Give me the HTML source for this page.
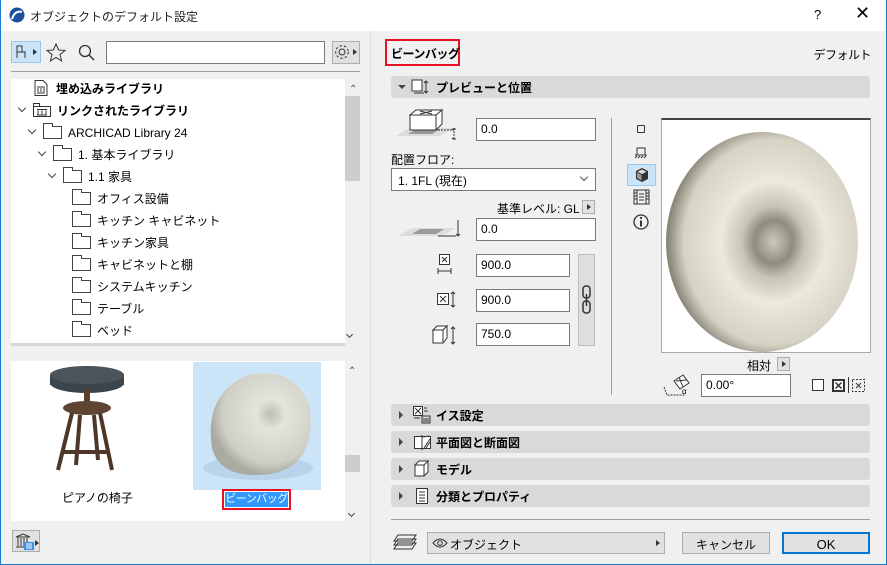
<!DOCTYPE html>
<html><head><meta charset="utf-8"><style>
*{box-sizing:border-box;margin:0;padding:0}
body{width:887px;height:565px;overflow:hidden;background:#f0f0f0;font-family:"Liberation Sans","Noto Sans CJK JP",sans-serif;font-size:12px;color:#000;position:relative}
.a{position:absolute;white-space:nowrap}
.inp{position:absolute;background:#fff;border:1px solid #7a7a7a;padding:3px 0 0 4px;font-size:12px;white-space:nowrap}
.sec{position:absolute;left:391px;width:479px;height:22px;background:#d9d9d9;border-radius:3px;font-weight:bold;font-size:12px}
.sec .t{position:absolute;left:45px;top:3px}
.sec .tri{position:absolute;left:8px;top:7px;width:0;height:0;border-left:4px solid #444;border-top:4px solid transparent;border-bottom:4px solid transparent}
.row{position:absolute;height:22px;line-height:22px;font-size:12px;white-space:nowrap}
.fold{display:inline-block;width:19px;height:13px;border:1px solid #444;vertical-align:-2px;margin-right:6px;position:relative;background:#fff}
.fold:before{content:"";position:absolute;left:-1px;top:-4px;width:8px;height:3px;border:1px solid #444;border-bottom:none;background:#fff}
.chev{display:inline-block;width:6px;height:6px;border-right:1.5px solid #444;border-bottom:1.5px solid #444;transform:rotate(45deg);margin-right:8px;vertical-align:4px}
.btn{position:absolute;background:#e1e1e1;border:1px solid #adadad;text-align:center;font-size:12px;white-space:nowrap}
</style></head><body>
<div class="a" style="left:0;top:0;width:887px;height:565px;border:1px solid #1979ca;border-top:none"></div>
<div class="a" style="left:1px;top:0;width:885px;height:31px;background:#fff"></div>
<svg class="a" style="left:9px;top:7px" width="16" height="16"><circle cx="8" cy="8" r="7.5" fill="#1f4e9c"/><path d="M3 12 Q6 3 13 5" stroke="#fff" stroke-width="2" fill="none"/></svg>
<div class="a" style="left:30px;top:8px;font-size:12px;color:#222">オブジェクトのデフォルト設定</div>
<div class="a" style="left:814px;top:7px;font-size:13px">?</div>
<div class="a" style="left:855px;top:3px;font-size:18px;font-weight:300">✕</div>

<div class="a" style="left:11px;top:41px;width:30px;height:22px;background:#cce4f7;border:1px solid #99c9ef"></div>
<svg class="a" style="left:14px;top:44px" width="26" height="16"><path d="M3 2h5v6H3zM3 8h8v6M3 8v6M11 8v6" stroke="#333" fill="none"/><path d="M19 5l4 3-4 3z" fill="#333"/></svg>
<svg class="a" style="left:46px;top:43px" width="20" height="19"><path d="M10 1l2.6 6 6.4.4-5 4.2 1.6 6.3L10 14.5 4.4 18 6 11.6 1 7.4 7.4 7z" stroke="#333" fill="none"/></svg>
<svg class="a" style="left:78px;top:44px" width="18" height="18"><circle cx="7" cy="7" r="5.5" stroke="#333" fill="none" stroke-width="1.3"/><path d="M11 11l5 5" stroke="#333" stroke-width="1.5"/></svg>
<div class="inp" style="left:106px;top:41px;width:219px;height:23px"></div>
<div class="btn" style="left:332px;top:41px;width:28px;height:23px"></div>
<svg class="a" style="left:334px;top:44px" width="26" height="18"><circle cx="8" cy="8" r="3" stroke="#333" fill="none"/><circle cx="8" cy="8" r="6.3" stroke="#333" fill="none" stroke-dasharray="2.5 2"/><path d="M19 5l4 3-4 3z" fill="#333"/></svg>
<div class="a" style="left:11px;top:71px;width:349px;height:1px;background:#a0a0a0"></div>

<div class="a" style="left:11px;top:79px;width:334px;height:266px;background:#fff"></div>
<div class="a" style="left:345px;top:79px;width:15px;height:266px;background:#f0f0f0"></div>
<div class="a" style="left:345px;top:96px;width:15px;height:85px;background:#cdcdcd"></div>
<div class="a" style="left:349px;top:84px;font-size:10px;color:#555">⌃</div>
<div class="a" style="left:347px;top:330px;width:9px;height:9px;"><div class="chev" style="width:5px;height:5px"></div></div>
<div class="row" style="left:34px;top:78px;font-weight:bold"><svg width="14" height="16" style="vertical-align:-3px;margin-right:8px"><path d="M1 .5h8l4 4v11H1z" stroke="#333" fill="#fff"/><path d="M3 7h8M4 8v4M7 8v4M10 8v4M3 13h8" stroke="#333"/></svg>埋め込みライブラリ</div>
<div class="row" style="left:19px;top:100px;font-weight:bold"><span class="chev"></span><svg width="18" height="14" style="vertical-align:-2px;margin-right:6px"><path d="M.5 3.5h17v10H.5zM.5 3.5V.5h6v3" stroke="#333" fill="#fff"/><path d="M4 6.5h10M5 7.5v4M9 7.5v4M13 7.5v4M4 12h10" stroke="#333"/></svg>リンクされたライブラリ</div>
<div class="row" style="left:29px;top:122px"><span class="chev"></span><span class="fold"></span>ARCHICAD Library 24</div>
<div class="row" style="left:39px;top:144px"><span class="chev"></span><span class="fold"></span>1. 基本ライブラリ</div>
<div class="row" style="left:49px;top:166px"><span class="chev"></span><span class="fold"></span>1.1 家具</div>
<div class="row" style="left:72px;top:188px"><span class="fold"></span>オフィス設備</div>
<div class="row" style="left:72px;top:210px"><span class="fold"></span>キッチン キャビネット</div>
<div class="row" style="left:72px;top:232px"><span class="fold"></span>キッチン家具</div>
<div class="row" style="left:72px;top:254px"><span class="fold"></span>キャビネットと棚</div>
<div class="row" style="left:72px;top:276px"><span class="fold"></span>システムキッチン</div>
<div class="row" style="left:72px;top:298px"><span class="fold"></span>テーブル</div>
<div class="row" style="left:72px;top:320px"><span class="fold"></span>ベッド</div>
<div class="a" style="left:11px;top:343px;width:334px;height:3px;background:#d6d6d6"></div>

<div class="a" style="left:11px;top:361px;width:334px;height:160px;background:#fff"></div>
<div class="a" style="left:345px;top:361px;width:15px;height:160px;background:#f0f0f0"></div>
<div class="a" style="left:345px;top:455px;width:15px;height:17px;background:#cdcdcd"></div>
<div class="a" style="left:348px;top:366px;font-size:10px;color:#555">⌃</div>
<div class="a" style="left:349px;top:509px"><div class="chev" style="width:5px;height:5px"></div></div>
<svg class="a" style="left:50px;top:365px" width="90" height="115"><ellipse cx="37" cy="18" rx="37" ry="10" fill="#3d454c"/><rect x="0" y="10" width="74" height="10" fill="#3d454c"/><ellipse cx="37" cy="10" rx="37" ry="9" fill="#4b545b"/><rect x="34" y="25" width="6" height="12" fill="#5b4030"/><ellipse cx="37" cy="43" rx="24" ry="7" fill="#5f4434"/><path d="M22 48L8 105M50 48l12 57M30 50l-4 50M44 50l4 45M12 87h46" stroke="#4e3628" stroke-width="4"/></svg>
<div class="a" style="left:62px;top:489px">ピアノの椅子</div>
<div class="a" style="left:193px;top:362px;width:128px;height:128px;background:#cce4f7"></div>
<svg class="a" style="left:200px;top:368px" width="115" height="118"><defs><radialGradient id="g" cx="0.6" cy="0.4" r="0.6"><stop offset="0" stop-color="#bdbdb4"/><stop offset="0.25" stop-color="#e4e4dc"/><stop offset="0.8" stop-color="#cfcfc6"/><stop offset="1" stop-color="#a9aaa1"/></radialGradient></defs><ellipse cx="58" cy="100" rx="55" ry="12" fill="#b8d3ea"/><path d="M45 8 Q95 -4 110 40 Q116 98 70 106 Q20 112 12 80 Q4 28 45 8z" fill="url(#g)"/></svg>
<div class="a" style="left:222px;top:489px;width:69px;height:21px;border:2px solid #e81123"></div>
<div class="a" style="left:225px;top:492px;width:63px;height:15px;background:#3399ff;color:#fff;font-size:11px;line-height:15px;text-align:center;letter-spacing:-0.5px;overflow:hidden">ビーンバッグ</div>
<div class="btn" style="left:12px;top:530px;width:28px;height:22px;background:#e1e1e1"></div>
<svg class="a" style="left:14px;top:532px" width="26" height="20"><path d="M2 5l7-3 7 3zM2 5h14M4 6v8M7 6v8M10 6v8M13 6v8M2 15h14" stroke="#333" fill="none"/><rect x="10" y="10" width="10" height="8" fill="#3c8ee6"/><path d="M12 12h6M12 14h6M12 16h6" stroke="#fff"/><path d="M21 8l4 3-4 3z" fill="#333"/></svg>

<div class="a" style="left:370px;top:31px;width:1px;height:533px;background:#dcdcdc"></div>

<div class="a" style="left:385px;top:39px;width:75px;height:27px;border:2px solid #e81123"></div>
<div class="a" style="left:391px;top:45px;font-weight:bold;font-size:12px;letter-spacing:-0.5px">ビーンバッグ</div>
<div class="a" style="right:16px;top:46px;font-size:12px;letter-spacing:-0.5px">デフォルト</div>

<div class="sec" style="top:76px"><span class="a" style="left:7px;top:9px;border-top:4px solid #444;border-left:4px solid transparent;border-right:4px solid transparent"></span>
<svg class="a" style="left:20px;top:3px" width="20" height="16"><path d="M1 1h10v11H1z" stroke="#333" fill="#fff"/><path d="M3 14h10M15 2v12M13 4l2-2 2 2M13 12l2 2 2-2" stroke="#333" fill="none"/></svg><span class="t">プレビューと位置</span></div>

<svg class="a" style="left:396px;top:108px" width="66" height="40"><path d="M0 28l14-8h44l-14 8z" fill="#dcdcdc"/><path d="M12 26l8-5h24l-8 5z" fill="#9a9a9a"/><path d="M14 7l6-5h26l-6 5zM14 7h26v15H14zM40 7l6-5v14l-6 6" stroke="#333" fill="#fff"/><path d="M24 3l12 3M36 3l-12 3" stroke="#333"/><path d="M42 22h16M58 20v12M56 22l2-2 2 2M56 30l2 2 2-2" stroke="#333" fill="none" stroke-dasharray="2 1"/></svg>
<div class="inp" style="left:476px;top:118px;width:120px;height:23px">0.0</div>
<div class="a" style="left:391px;top:151px">配置フロア:</div>
<div class="inp" style="left:391px;top:168px;width:205px;height:23px;padding-left:6px">1. 1FL (現在)<span class="a" style="right:8px;top:5px;width:6px;height:6px;border-right:1px solid #555;border-bottom:1px solid #555;transform:rotate(45deg)"></span></div>
<div class="a" style="left:497px;top:200px">基準レベル: GL</div>
<div class="btn" style="left:582px;top:200px;width:13px;height:14px"><span class="a" style="left:4px;top:3px;border-left:4px solid #333;border-top:3.5px solid transparent;border-bottom:3.5px solid transparent"></span></div>
<svg class="a" style="left:398px;top:218px" width="64" height="22"><path d="M0 18l14-8h44l-14 8z" fill="#dcdcdc"/><path d="M14 16l8-5h24l-8 5z" fill="#9a9a9a"/><path d="M40 18h18M60 2v16M58 16l2 2 2-2" stroke="#333" fill="none"/></svg>
<div class="inp" style="left:476px;top:218px;width:120px;height:23px">0.0</div>
<svg class="a" style="left:436px;top:254px" width="22" height="22"><rect x="3.5" y=".5" width="10" height="10" stroke="#333" fill="#fff"/><path d="M6 3l5 5M11 3l-5 5M2 14v6M15 14v6M2 17h13" stroke="#333"/></svg>
<div class="inp" style="left:476px;top:254px;width:94px;height:23px">900.0</div>
<svg class="a" style="left:437px;top:290px" width="24" height="20"><rect x=".5" y="3.5" width="11" height="11" stroke="#333" fill="#fff"/><path d="M3 6l6 6M9 6l-6 6M16 2v15M14 4l2-2 2 2M14 15l2 2 2-2" stroke="#333" fill="none"/></svg>
<div class="inp" style="left:476px;top:289px;width:94px;height:23px">900.0</div>
<svg class="a" style="left:432px;top:323px" width="28" height="24"><path d="M1 7l4-4h10l-4 4zM1 7h10v13H1zM11 7l4-4v12l-4 5" stroke="#333" fill="#fff"/><path d="M21 4v17M19 6l2-2 2 2M19 19l2 2 2-2" stroke="#333" fill="none"/></svg>
<div class="inp" style="left:476px;top:323px;width:94px;height:23px">750.0</div>
<div class="a" style="left:578px;top:254px;width:17px;height:92px;background:#dedede;border:1px solid #bdbdbd"></div>
<svg class="a" style="left:581px;top:285px" width="12" height="30"><rect x="2" y="1" width="7" height="12" rx="3" stroke="#333" fill="none" stroke-width="1.5"/><rect x="2" y="16" width="7" height="12" rx="3" stroke="#333" fill="none" stroke-width="1.5"/><path d="M5.5 9v12" stroke="#333" stroke-width="1.5"/></svg>
<div class="a" style="left:611px;top:118px;width:1px;height:277px;background:#a0a0a0"></div>

<div class="a" style="left:637px;top:125px;width:8px;height:8px;border:1.3px solid #333;border-radius:1px"></div>
<svg class="a" style="left:634px;top:146px" width="16" height="14"><path d="M3 9V2h8v7M1 9h12" stroke="#333" fill="none"/><path d="M1 12l2-2M4 12l2-2M7 12l2-2M10 12l2-2" stroke="#333"/></svg>
<div class="a" style="left:627px;top:164px;width:29px;height:22px;background:#cce4f7;border:1px solid #99c9ef"></div>
<svg class="a" style="left:634px;top:167px" width="16" height="16"><path d="M8 1l6 3v8l-6 3-6-3V4z" fill="#333"/><path d="M8 2.5l4.5 2.2L8 7 3.5 4.7z" fill="#ddd"/><path d="M3 5.5L7.5 8v5.5L3 11z" fill="#999"/></svg>
<svg class="a" style="left:633px;top:189px" width="17" height="16"><path d="M1 1h15v14H1zM4 1v14M13 1v14M6 5h5M6 8h5M6 11h5" stroke="#333" fill="none"/><path d="M1 4h3M1 7h3M1 10h3M13 4h3M13 7h3M13 10h3" stroke="#333"/></svg>
<svg class="a" style="left:633px;top:214px" width="16" height="16"><circle cx="8" cy="8" r="7" stroke="#333" fill="none" stroke-width="1.3"/><path d="M8 6.5v6" stroke="#333" stroke-width="2"/><circle cx="8" cy="4" r="1.1" fill="#333"/></svg>

<div class="a" style="left:661px;top:118px;width:210px;height:235px;background:#fff;border:1px solid #aaa;border-top:2px solid #444"></div>
<svg class="a" style="left:662px;top:120px" width="208" height="232"><defs><radialGradient id="d" cx="0.56" cy="0.5" r="0.55"><stop offset="0" stop-color="#cfcabb"/><stop offset="0.18" stop-color="#8f8b7e"/><stop offset="0.3" stop-color="#c8c4b6"/><stop offset="0.5" stop-color="#ece9dd"/><stop offset="0.85" stop-color="#d6d2c4"/><stop offset="1" stop-color="#8a8678"/></radialGradient></defs><ellipse cx="100" cy="122" rx="96" ry="110" fill="url(#d)"/></svg>
<div class="a" style="left:747px;top:357px">相対</div>
<div class="btn" style="left:777px;top:357px;width:13px;height:14px"><span class="a" style="left:4px;top:3px;border-left:4px solid #333;border-top:3.5px solid transparent;border-bottom:3.5px solid transparent"></span></div>
<svg class="a" style="left:662px;top:372px" width="30" height="26"><path d="M12 9l9-6 6 8-9 6z" stroke="#333" fill="#fff"/><path d="M14 9l11-1M17 5l4 10" stroke="#333"/><path d="M2 15l3 8h18" stroke="#333" fill="none" stroke-dasharray="2 1"/><text x="20" y="22" font-size="8" font-family="Liberation Sans">α</text></svg>
<div class="inp" style="left:701px;top:374px;width:90px;height:23px">0.00°</div>
<div class="a" style="left:812px;top:379px;width:12px;height:12px;border:1px solid #333;background:#fff"></div>
<svg class="a" style="left:832px;top:379px" width="13" height="13"><rect x="0" y="0" width="13" height="13" fill="#333"/><rect x="2" y="2" width="9" height="9" fill="#fff"/><path d="M3.5 3.5l6 6M9.5 3.5l-6 6" stroke="#333" stroke-width="1.5"/></svg>
<div class="a" style="left:848px;top:377px;width:1px;height:16px;background:#333"></div>
<svg class="a" style="left:852px;top:379px" width="13" height="13"><rect x=".5" y=".5" width="12" height="12" stroke="#333" fill="none" stroke-dasharray="2 1.5"/><path d="M4 4l5 5M9 4l-5 5" stroke="#333"/></svg>

<div class="sec" style="top:404px"><span class="tri"></span><svg class="a" style="left:22px;top:2px" width="18" height="18"><rect x=".5" y=".5" width="9" height="9" stroke="#333" fill="#fff"/><path d="M2 2l6 6M8 2l-6 6M11 2h3M11 5h4M9 10h8v7H9zM10 13h6M10 15h6M1 12h6" stroke="#333" fill="none"/></svg><span class="t">イス設定</span></div>
<div class="sec" style="top:431px"><span class="tri"></span><svg class="a" style="left:23px;top:3px" width="18" height="16"><path d="M.5 2.5h16v12H.5z" stroke="#333" fill="#fff"/><path d="M9 3l6-1M10 14l6-9M12 14l4-6M8 1v15" stroke="#333"/></svg><span class="t">平面図と断面図</span></div>
<div class="sec" style="top:458px"><span class="tri"></span><svg class="a" style="left:23px;top:2px" width="16" height="17"><path d="M1 5l4-4h9l-4 4zM1 5h9v11H1zM10 5l4-4v11l-4 4" stroke="#333" fill="#fff"/></svg><span class="t">モデル</span></div>
<div class="sec" style="top:485px"><span class="tri"></span><svg class="a" style="left:25px;top:3px" width="12" height="16"><path d="M.5 .5h11v15H.5zM3 4h6M3 7h6M3 10h6M3 13h6" stroke="#333" fill="#fff"/></svg><span class="t">分類とプロパティ</span></div>

<div class="a" style="left:391px;top:519px;width:479px;height:1px;background:#a0a0a0"></div>
<svg class="a" style="left:393px;top:532px" width="26" height="20"><path d="M5 3h18l-4 6H1z M5 7h18l-4 6H1z M5 11h18l-4 6H1z" stroke="#333" fill="#f0f0f0"/></svg>
<div class="btn" style="left:427px;top:532px;width:238px;height:22px;text-align:left;padding:3px 0 0 22px">オブジェクト<span class="a" style="right:4px;top:7px;border-left:4px solid #333;border-top:3.5px solid transparent;border-bottom:3.5px solid transparent"></span></div>
<svg class="a" style="left:432px;top:537px" width="16" height="12"><path d="M1 6Q8-2 15 6Q8 14 1 6z" stroke="#333" fill="none"/><circle cx="8" cy="6" r="2.3" stroke="#333" fill="none"/></svg>
<div class="btn" style="left:682px;top:532px;width:88px;height:22px;padding-top:3px">キャンセル</div>
<div class="btn" style="left:782px;top:532px;width:88px;height:22px;padding-top:3px;border:2px solid #0078d7;font-size:13px">OK</div>
</body></html>
